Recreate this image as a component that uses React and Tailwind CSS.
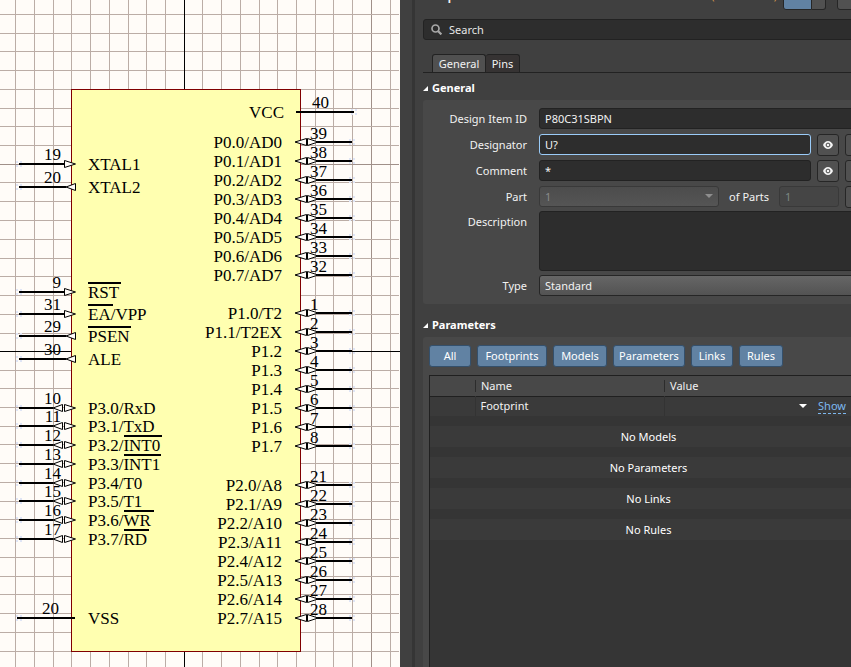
import React from "react";

const GRID_X = [15, 34, 53, 71, 90, 109, 128, 146, 165, 202, 221, 240, 259, 277, 296, 315, 333, 352, 371, 390];
const GRID_Y = [
  14, 33, 51, 70, 89, 108, 126, 145, 164, 182, 201, 220, 239, 258, 276, 295, 314, 333,
  370, 388, 407, 426, 444, 463, 482, 501, 519, 538, 557, 576, 594, 613, 632, 651,
];

const LEFT_PINS = [
  { n: "19", y: 164, kind: "in", name: "XTAL1" },
  { n: "20", y: 187, kind: "out", name: "XTAL2" },
  { n: "9", y: 292, kind: "in", name: "RST", bar: [88, 33] },
  { n: "31", y: 314, kind: "in", name: "EA/VPP", bar: [88, 25] },
  { n: "29", y: 336, kind: "out", name: "PSEN", bar: [88, 43] },
  { n: "30", y: 359, kind: "out", name: "ALE" },
  { n: "10", y: 408, kind: "io", name: "P3.0/RxD" },
  { n: "11", y: 426, kind: "io", name: "P3.1/TxD" },
  { n: "12", y: 445, kind: "io", name: "P3.2/INT0", bar: [124, 38] },
  { n: "13", y: 464, kind: "io", name: "P3.3/INT1", bar: [124, 37] },
  { n: "14", y: 483, kind: "io", name: "P3.4/T0" },
  { n: "15", y: 501, kind: "io", name: "P3.5/T1" },
  { n: "16", y: 520, kind: "io", name: "P3.6/WR", bar: [124, 30] },
  { n: "17", y: 539, kind: "io", name: "P3.7/RD", bar: [124, 25] },
  { n: "20", y: 618, kind: "power", name: "VSS" },
];

const port = (top, numbers, names) => names.map((name, i) => ({ n: String(numbers[i]), y: top + 19 * i, name }));

const RIGHT_PINS = [
  ...port(142, [39, 38, 37, 36, 35, 34, 33, 32], [
    "P0.0/AD0", "P0.1/AD1", "P0.2/AD2", "P0.3/AD3", "P0.4/AD4", "P0.5/AD5", "P0.6/AD6", "P0.7/AD7",
  ]),
  ...port(313, [1, 2, 3, 4, 5, 6, 7, 8], ["P1.0/T2", "P1.1/T2EX", "P1.2", "P1.3", "P1.4", "P1.5", "P1.6", "P1.7"]),
  ...port(485, [21, 22, 23, 24, 25, 26, 27, 28], [
    "P2.0/A8", "P2.1/A9", "P2.2/A10", "P2.3/A11", "P2.4/A12", "P2.5/A13", "P2.6/A14", "P2.7/A15",
  ]),
];

function HotSpot({ x, y }) {
  return (
    <g fill="#dfe5f6">
      <rect x={x - 2} y={y - 3} width="2" height="2" />
      <rect x={x + 2} y={y - 3} width="2" height="2" />
      <rect x={x - 2} y={y + 1} width="2" height="2" />
      <rect x={x + 2} y={y + 1} width="2" height="2" />
    </g>
  );
}

function Arrow({ points }) {
  return <polygon points={points} fill="#fffcf8" stroke="#000" strokeWidth="1" />;
}

function LeftPin({ pin }) {
  const { y, kind } = pin;
  const end = kind === "io" ? 53 : kind === "power" ? 75 : 66;
  const start = kind === "power" ? 17 : 19;
  return (
    <g>
      <HotSpot x={18} y={y} />
      <g shapeRendering="crispEdges">
        <rect x={start} y={y - 1} width={end - start} height="2" />
        {pin.bar && <rect x={pin.bar[0]} y={y - 10} width={pin.bar[1]} height="2" />}
      </g>
      <text x={kind === "power" ? 59 : 61} y={y - 4} textAnchor="end">{pin.n}</text>
      {kind === "in" && <Arrow points={`64.5,${y - 3.5} 64.5,${y + 3.5} 75.5,${y}`} />}
      {kind === "out" && <Arrow points={`75.5,${y - 3.5} 75.5,${y + 3.5} 66,${y}`} />}
      {kind === "io" && (
        <>
          <Arrow points={`62.5,${y - 3.5} 62.5,${y + 3.5} 53,${y}`} />
          <Arrow points={`64.5,${y - 3.5} 64.5,${y + 3.5} 75.5,${y}`} />
        </>
      )}
      <text x="88" y={y + 6}>{pin.name}</text>
    </g>
  );
}

function RightPin({ pin }) {
  const { y } = pin;
  return (
    <g>
      <HotSpot x={351} y={y} />
      <rect x="317" y={y - 1} width="35" height="2" shapeRendering="crispEdges" />
      <text x="310" y={y - 3}>{pin.n}</text>
      <Arrow points={`306.5,${y - 3.5} 306.5,${y + 3.5} 295,${y}`} />
      <Arrow points={`307.5,${y - 3.5} 307.5,${y + 3.5} 318,${y}`} />
      <text x="282" y={y + 6} textAnchor="end">{pin.name}</text>
    </g>
  );
}

function Schematic() {
  return (
    <svg
      width="400"
      height="667"
      className="block overflow-visible font-['Liberation_Serif','Times_New_Roman',serif] text-[17px]"
      role="img"
      aria-label="P80C31SBPN symbol"
    >
      <g shapeRendering="crispEdges">
        {GRID_X.map((x) => (
          <rect key={x} x={x} y="0" width="1" height="667" fill={x === 371 ? "#a09089" : "#bbada6"} />
        ))}
        {GRID_Y.map((y) => (
          <rect key={y} x="0" y={y} width="399" height="1" fill={y === 164 ? "#a09089" : "#bbada6"} />
        ))}
        <rect x="184" y="0" width="1" height="667" />
        <rect x="0" y="351" width="400" height="1" />
        <rect x="71.5" y="89.5" width="229" height="562" fill="#ffffb0" stroke="#800000" />
      </g>
      {LEFT_PINS.map((pin) => <LeftPin key={pin.name} pin={pin} />)}
      <HotSpot x={353} y={112} />
      <rect x="296" y="111" width="58" height="2" shapeRendering="crispEdges" />
      <text x="312" y="108">40</text>
      <text x="284" y="118" textAnchor="end">VCC</text>
      {RIGHT_PINS.map((pin) => <RightPin key={pin.name} pin={pin} />)}
    </svg>
  );
}

const FIELD = "h-[21px] rounded-[3px] border border-[#222222] bg-[#2d2d2d] px-[5px] text-[#f2f2f2] outline-none";
const SIDE_BUTTON =
  "flex h-[22px] w-[22px] shrink-0 items-center justify-center rounded-[3px] border border-[#262626] bg-[#515151]";

function Row({ label, id, children }) {
  return (
    <div className="flex items-center gap-3">
      <label htmlFor={id} className="w-[104px] shrink-0 text-right">{label}</label>
      <div className="flex h-[21px] min-w-0 flex-1 items-center gap-[6px]">{children}</div>
    </div>
  );
}

function Eye() {
  return (
    <svg width="10" height="8" viewBox="0 0 10 8">
      <path d="M0 4C1.2 1.4 2.9 0 5 0s3.800 1.400 5 4C8.800 6.600 7.100 8 5 8S1.200 6.600 0 4z" fill="#f4f4f4" />
      <circle cx="5" cy="4" r="1.900" fill="none" stroke="#444" strokeWidth="1" />
    </svg>
  );
}

function VisibilityButtons({ name }) {
  return (
    <>
      <button type="button" aria-label={`Show ${name}`} className={SIDE_BUTTON}><Eye /></button>
      <button type="button" aria-label={`Lock ${name}`} className={SIDE_BUTTON} />
    </>
  );
}

function Caret({ className }) {
  return (
    <svg width="8" height="4" viewBox="0 0 8 4" className={className}>
      <path d="M0 0h8L4 4z" fill="currentColor" />
    </svg>
  );
}

function SectionTitle({ children }) {
  return (
    <h2 className="flex h-6 items-center gap-1 font-bold text-white">
      <svg width="5" height="5" viewBox="0 0 5 5"><path d="M5 0v5H0z" fill="#fff" /></svg>
      {children}
    </h2>
  );
}

function General() {
  return (
    <section>
      <SectionTitle>General</SectionTitle>
      <div className="flex flex-col gap-1 rounded-[3px] bg-[#484848] pt-2 pr-[6px] pb-2">
        <div className="flex flex-col gap-[5px]">
          <Row label="Design Item ID" id="design">
            <input id="design" defaultValue="P80C31SBPN" className={`${FIELD} w-full`} />
          </Row>
          <Row label="Designator" id="designator">
            <input
              id="designator"
              defaultValue="U?"
              className="h-[21px] min-w-0 flex-1 rounded-[3px] border border-[#9acbf8] bg-[#2d2d2d] px-[5px] text-[#f2f2f2] outline-none"
            />
            <VisibilityButtons name="designator" />
          </Row>
          <Row label="Comment" id="comment">
            <input id="comment" defaultValue="*" className={`${FIELD} min-w-0 flex-1`} />
            <VisibilityButtons name="comment" />
          </Row>
          <Row label="Part" id="part">
            <div className="relative min-w-0 flex-1">
              <select
                id="part"
                disabled
                className="block h-[21px] w-full appearance-none rounded-[3px] border border-[#393939] bg-linear-to-b from-[#4c4c4c] to-[#555555] px-[5px] text-[#8a8a8a] opacity-100"
              >
                <option>1</option>
              </select>
              <Caret className="pointer-events-none absolute top-2 right-[6px] text-[#8e8e8e]" />
            </div>
            <label htmlFor="parts" className="px-1">of Parts</label>
            <input
              id="parts"
              disabled
              defaultValue="1"
              className="h-[21px] w-[60px] rounded-[3px] border border-[#393939] bg-[#454545] px-[5px] text-[#7d8783]"
            />
            <button type="button" aria-label="Lock part" className={SIDE_BUTTON} />
          </Row>
        </div>
        <div className="flex gap-3">
          <label htmlFor="description" className="w-[104px] shrink-0 pt-[3px] text-right">Description</label>
          <textarea
            id="description"
            className="block h-[60px] min-w-0 flex-1 resize-none rounded-[3px] border border-[#222222] bg-[#2d2d2d] px-[5px] outline-none"
          />
        </div>
        <Row label="Type" id="type">
          <div className="relative w-full">
            <select
              id="type"
              className="block h-[21px] w-full appearance-none rounded-[3px] border border-[#262626] bg-linear-to-b from-[#666666] to-[#535353] px-[5px] text-[#f2f2f2]"
            >
              <option>Standard</option>
            </select>
            <Caret className="pointer-events-none absolute top-2 right-[6px] text-white" />
          </div>
        </Row>
      </div>
    </section>
  );
}

const FILTERS = [
  ["All", "w-[42px]"],
  ["Footprints", "w-[70px]"],
  ["Models", "w-[54px]"],
  ["Parameters", "w-[72px]"],
  ["Links", "w-[42px]"],
  ["Rules", "w-[44px]"],
];

function Parameters() {
  return (
    <section className="flex flex-1 flex-col">
      <SectionTitle>Parameters</SectionTitle>
      <div className="flex flex-1 flex-col gap-2 rounded-t-[3px] bg-[#484848] px-[6px] pt-2">
        <div className="flex gap-[6px]">
          {FILTERS.map(([name, width]) => (
            <button
              key={name}
              type="button"
              className={`${width} h-[22px] rounded-[3px] border border-[#34506c] bg-[#6182a3] text-center text-white`}
            >
              {name}
            </button>
          ))}
        </div>
        <div className="flex-1 border-t border-l border-[#202020] bg-[#353535]">
          <table className="w-full table-fixed border-collapse text-left">
            <colgroup>
              <col className="w-[45px]" />
              <col className="w-[189px]" />
              <col />
            </colgroup>
            <thead>
              <tr className="h-5 border-b border-[#202020] bg-[#484848]">
                <th className="p-0" />
                <th className="p-0 font-normal">
                  <div className="border-l border-[#2c2c2c] pl-[5px] leading-3">Name</div>
                </th>
                <th className="p-0 font-normal">
                  <div className="border-l border-[#2c2c2c] pl-[5px] leading-3">Value</div>
                </th>
              </tr>
            </thead>
            <tbody>
              <tr className="h-5 bg-[#3a3a3a]">
                <td className="p-0" />
                <td className="border-l border-[#333333] p-0 pl-[5px]">Footprint</td>
                <td className="border-l border-[#333333] p-0">
                  <div className="flex items-center justify-end gap-[11px] pr-[21px]">
                    <Caret className="text-white" />
                    <a href="#show" className="border-b border-dashed border-[#7db8ef] leading-[14px] text-[#7db8ef]">Show</a>
                  </div>
                </td>
              </tr>
              {["No Models", "No Parameters", "No Links", "No Rules"].map((text) => (
                <tr key={text}>
                  <td colSpan={3} className="p-0 pt-[10px]">
                    <div className="h-[21px] bg-[#3a3a3a] text-center leading-[21px] text-white">{text}</div>
                  </td>
                </tr>
              ))}
            </tbody>
          </table>
        </div>
      </div>
    </section>
  );
}

export default function App() {
  return (
    <div className="flex h-screen overflow-hidden bg-[#404040] font-['Noto_Sans','Segoe_UI',sans-serif] text-[11px] leading-4 text-[#f2f2f2]">
      <main className="w-[400px] shrink-0 overflow-hidden bg-[#fffcf8]">
        <Schematic />
      </main>
      <div className="ml-3 w-[3px] shrink-0 bg-[#353535]" />
      <aside className="min-w-0 flex-1 overflow-hidden pl-2">
        <div className="flex h-full min-w-[450px] flex-col">
          <header className="flex h-[10px] shrink-0 items-end overflow-hidden">
            <h1 className="flex-1 pb-[6px] font-bold">Component</h1>
            <span className="pb-[6px] text-[#d99a4e]">(and 1 more)</span>
            <button
              type="button"
              aria-label="Filter"
              className="ml-[6px] flex h-6 w-[29px] items-center justify-center rounded-bl-[3px] border border-[#262626] bg-[#6182a3]"
            >
              <svg width="10" height="10" viewBox="0 0 10 10"><path d="M0 0h10L6 4v3H4V4z" fill="#fff" /></svg>
            </button>
            <button type="button" aria-label="Filter options" className="h-6 w-[14px] rounded-br-[3px] border border-l-0 border-[#262626] bg-[#515151]" />
            <button type="button" aria-label="Panel menu" className="ml-[11px] h-6 w-9 rounded-[3px] border border-[#262626] bg-[#515151]" />
          </header>
          <div className="mt-[9px] flex h-[21px] shrink-0 items-center gap-[7px] rounded-[3px] border border-[#222222] bg-[#2d2d2d] px-[7px]">
            <svg width="11" height="11" viewBox="0 0 11 11" fill="none" stroke="#a8a8a8">
              <circle cx="4.500" cy="4.500" r="3.500" strokeWidth="1.700" />
              <path d="M7.200 7.200l3.200 3.200" strokeWidth="2.200" />
            </svg>
            <input
              aria-label="Search"
              placeholder="Search"
              className="min-w-0 flex-1 bg-transparent text-[#f2f2f2] outline-none placeholder:text-[#e6e6e6]"
            />
          </div>
          <nav className="mt-[14px] flex h-[19px] shrink-0 border-b border-[#222222] pl-[9px]">
            <button type="button" className="w-[54px] rounded-t-[3px] border border-b-0 border-[#222222] bg-[#505050]">General</button>
            <button type="button" className="w-[34px] rounded-t-[3px] border border-b-0 border-l-0 border-[#222222] bg-[#363333]">Pins</button>
          </nav>
          <div className="flex flex-1 flex-col gap-[9px] pt-[3px]">
            <General />
            <Parameters />
          </div>
        </div>
      </aside>
    </div>
  );
}
